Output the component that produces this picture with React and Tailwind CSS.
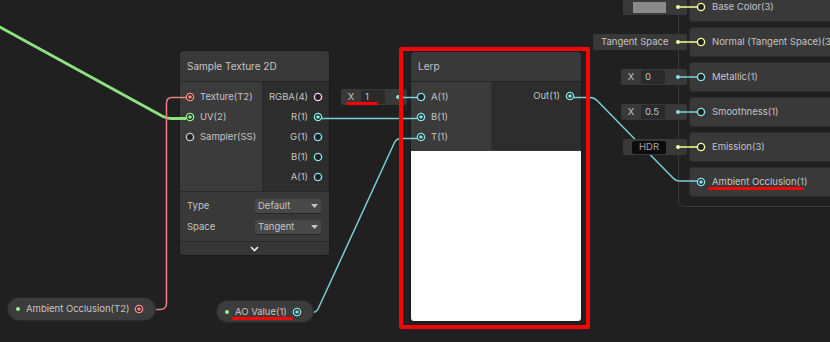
const FLOAT = '#84e4e7';
const VEC2 = '#9aef92';
const VEC3 = '#f6ff9a';
const VEC4 = '#fbcbf4';
const TEX = '#ff8b8b';
const SAMPLER = '#c8c8c8';
const WIRE_CYAN = '#78d0d4';

function Port({ color, filled }) {
  return (
    <svg width="10" height="10" viewBox="0 0 10 10" className="shrink-0">
      <circle cx="5" cy="5" r="3.6" fill="#1e1e1e" stroke={color} strokeWidth="1.4" />
      {filled && <circle cx="5" cy="5" r="1.8" fill={color} />}
    </svg>
  );
}

function Dot({ color }) {
  return <span className="w-[4px] h-[4px] rounded-full shrink-0" style={{ backgroundColor: color }} />;
}

function InRow({ label, color, filled }) {
  return (
    <div className="h-[20px] flex items-center pl-[5px] gap-[5px]">
      <Port color={color} filled={filled} />
      <span className="leading-none whitespace-nowrap">{label}</span>
    </div>
  );
}

function OutRow({ label, color, filled }) {
  return (
    <div className="h-[20px] flex items-center justify-end pr-[6px] gap-[5px]">
      <span className="leading-none whitespace-nowrap">{label}</span>
      <Port color={color} filled={filled} />
    </div>
  );
}

function Dropdown({ value }) {
  return (
    <div className="w-[66px] h-[14px] bg-[#484848] rounded-[2px] flex items-center justify-between px-[3px] shadow-[0_1px_0_#262626]">
      <span className="leading-none">{value}</span>
      <svg width="7" height="4" viewBox="0 0 7 4">
        <polygon points="0,0 7,0 3.5,4" fill="#c4c4c4" />
      </svg>
    </div>
  );
}

function SampleTexture() {
  return (
    <div className="absolute left-[180px] top-[51px] w-[149px] flex flex-col rounded-[3px] overflow-hidden text-[9.5px] text-[#c4c4c4] shadow-[0_0_0_1px_#1a1a1a]">
      <div className="h-[31px] bg-[#393939] flex items-center px-[7px] text-[10px] border-b border-[#252525]">
        Sample Texture 2D
      </div>
      <div className="flex h-[109px]">
        <div className="w-[82px] bg-[#3b3b3b] pt-[5px] flex flex-col">
          <InRow label="Texture(T2)" color={TEX} filled />
          <InRow label="UV(2)" color={VEC2} filled />
          <InRow label="Sampler(SS)" color={SAMPLER} />
        </div>
        <div className="flex-1 bg-[#2d2d2d] pt-[5px] flex flex-col">
          <OutRow label="RGBA(4)" color={VEC4} />
          <OutRow label="R(1)" color={FLOAT} filled />
          <OutRow label="G(1)" color={FLOAT} />
          <OutRow label="B(1)" color={FLOAT} />
          <OutRow label="A(1)" color={FLOAT} />
        </div>
      </div>
      <div className="h-[50px] bg-[#393939] border-t border-[#2a2a2a] pl-[7px] pr-[8px] pt-[7px] flex flex-col gap-[7px]">
        <div className="h-[14px] flex items-center justify-between">
          <span className="leading-none">Type</span>
          <Dropdown value="Default" />
        </div>
        <div className="h-[14px] flex items-center justify-between">
          <span className="leading-none">Space</span>
          <Dropdown value="Tangent" />
        </div>
      </div>
      <div className="h-[14px] bg-[#363636] border-t border-[#2a2a2a] flex items-center justify-center">
        <svg width="9" height="6" viewBox="0 0 9 6">
          <polyline points="1,1 4.5,4.5 8,1" fill="none" stroke="#e8e8e8" strokeWidth="1.6" />
        </svg>
      </div>
    </div>
  );
}

function Lerp() {
  return (
    <div className="absolute left-[411px] top-[52px] w-[170px] flex flex-col rounded-[3px] overflow-hidden text-[9.5px] text-[#c4c4c4] shadow-[0_0_0_1px_#1a1a1a]">
      <div className="h-[30px] bg-[#393939] flex items-center px-[7px] text-[10px] border-b border-[#252525]">
        Lerp
      </div>
      <div className="flex h-[68px]">
        <div className="w-[80px] bg-[#3b3b3b] pt-[5px] flex flex-col">
          <InRow label="A(1)" color={FLOAT} />
          <InRow label="B(1)" color={FLOAT} filled />
          <InRow label="T(1)" color={FLOAT} filled />
        </div>
        <div className="flex-1 bg-[#2d2d2d] pt-[4px] flex flex-col">
          <OutRow label="Out(1)" color={FLOAT} filled />
        </div>
      </div>
      <div className="h-[171px] bg-white border-t border-[#3a3a3a]" />
    </div>
  );
}

function Pill({ label, port, className }) {
  return (
    <div className={`absolute flex items-center bg-[#3c3c3c] rounded-full text-[9.5px] text-[#c4c4c4] shadow-[0_0_0_1px_#2a2a2a] ${className}`}>
      <span className="ml-[8px] flex"><Dot color={VEC2} /></span>
      <span className="ml-[6px] leading-none whitespace-nowrap">{label}</span>
      <span className="ml-auto mr-[11px] flex"><Port color={port} filled /></span>
    </div>
  );
}

function FloatField({ value, className }) {
  return (
    <div className={`absolute w-[66px] h-[16px] bg-[#393939] rounded-[2px] flex items-center text-[9.5px] text-[#c4c4c4] ${className}`}>
      <span className="w-[20px] text-center leading-none">X</span>
      <span className="w-[24px] h-[14px] bg-[#2a2a2a] rounded-[2px] pl-[4px] flex items-center leading-none">{value}</span>
      <span className="ml-auto mr-[7px] flex"><Dot color={FLOAT} /></span>
    </div>
  );
}

function MasterRow({ label, color, filled }) {
  return (
    <div className="h-[28px] bg-[#393939] rounded-[3px] flex items-center pl-[6px] gap-[6px] text-[9.5px] text-[#c4c4c4] shadow-[0_0_0_1px_#2c2c2c]">
      <Port color={color} filled={filled} />
      <span className="leading-none whitespace-nowrap">{label}</span>
    </div>
  );
}

export default function App() {
  return (
    <div className="relative w-[830px] h-[342px] bg-[#202020] overflow-hidden font-['Inter',sans-serif]">
      {/* master stack context */}
      <div className="absolute left-[678px] top-[-30px] w-[200px] border border-[#3a3a3a] rounded-[7px] pl-[11px] pt-[22px] pb-[10px] flex flex-col gap-[7px]">
        <MasterRow label="Base Color(3)" color={VEC3} />
        <MasterRow label="Normal (Tangent Space)(3)" color={VEC3} />
        <MasterRow label="Metallic(1)" color={FLOAT} />
        <MasterRow label="Smoothness(1)" color={FLOAT} />
        <MasterRow label="Emission(3)" color={VEC3} />
        <MasterRow label="Ambient Occlusion(1)" color={FLOAT} filled />
      </div>

      <SampleTexture />
      <Lerp />

      {/* edges */}
      <svg className="absolute inset-0" width="830" height="342" viewBox="0 0 830 342" fill="none">
        <path d="M -2 26 L 163 116.5 Q 167 118.5 171 118.5 L 186 118.5" stroke="#8fe083" strokeWidth="3" />
        <path d="M 186 97.5 L 172 97.5 Q 166.5 97.5 166.5 103 L 166.5 303 Q 166.5 309.5 160 309.5 L 150 309.5" stroke="#ec8080" strokeWidth="1.5" />
        <path d="M 322 118.5 L 417 118.5" stroke={WIRE_CYAN} strokeWidth="1.5" />
        <path d="M 302 312.5 L 312 312.5 Q 316.5 312.5 318.5 308 L 394.5 142.5 Q 396.5 138.5 401 138.5 L 417 138.5" stroke={WIRE_CYAN} strokeWidth="1.5" />
        <path d="M 574 97.5 L 590 97.5 Q 594 97.5 597 100.5 L 673 178 Q 676 181 680 181 L 697 181" stroke={WIRE_CYAN} strokeWidth="1.5" />
      </svg>

      <Pill label="Ambient Occlusion(T2)" port={TEX} className="left-[8px] top-[298px] w-[147px] h-[22px]" />
      <Pill label="AO Value(1)" port={FLOAT} className="left-[217px] top-[301px] w-[96px] h-[21px]" />

      {/* inline value fields */}
      <FloatField value="1" className="left-[341px] top-[89px]" />
      <div className="absolute left-[623px] top-[-1px] w-[64px] h-[16px] bg-[#393939] rounded-[2px] flex items-center">
        <span className="ml-[10px] w-[33px] h-[11px] bg-[#8a8a8a]" />
        <span className="ml-auto mr-[7px] flex"><Dot color={VEC3} /></span>
      </div>
      <div className="absolute left-[593px] top-[34px] w-[94px] h-[16px] bg-[#393939] rounded-[2px] flex items-center text-[9.5px] text-[#c4c4c4]">
        <span className="ml-[8px] leading-none whitespace-nowrap">Tangent Space</span>
        <span className="ml-auto mr-[7px] flex"><Dot color={VEC3} /></span>
      </div>
      <FloatField value="0" className="left-[621px] top-[69px]" />
      <FloatField value="0.5" className="left-[621px] top-[104px]" />
      <div className="absolute left-[623px] top-[139px] w-[64px] h-[16px] bg-[#393939] rounded-[2px] flex items-center text-[9.5px]">
        <span className="ml-[9px] w-[34px] h-[13px] bg-[#0c0c0c] rounded-[2px] flex items-center justify-center leading-none text-[#a8a8a8]">HDR</span>
        <span className="ml-auto mr-[7px] flex"><Dot color={VEC3} /></span>
      </div>

      {/* inline connectors */}
      <svg className="absolute inset-0" width="830" height="342" viewBox="0 0 830 342" fill="none">
        <path d="M 398 97.5 L 417 97.5" stroke={WIRE_CYAN} strokeWidth="1.5" />
        <path d="M 678 7 L 697 7" stroke={VEC3} strokeWidth="1.5" />
        <path d="M 678 42 L 697 42" stroke={VEC3} strokeWidth="1.5" />
        <path d="M 678 77 L 697 77" stroke={WIRE_CYAN} strokeWidth="1.5" />
        <path d="M 678 112 L 697 112" stroke={WIRE_CYAN} strokeWidth="1.5" />
        <path d="M 678 147 L 697 147" stroke={VEC3} strokeWidth="1.5" />
      </svg>

      {/* annotations */}
      <div className="absolute left-[399px] top-[47px] w-[191px] h-[282px] border-[4px] border-[#ff0000] rounded-[2px]" />
      <div className="absolute left-[346px] top-[102px] w-[32px] h-[3px] bg-[#ff0000] rounded-full" />
      <div className="absolute left-[232px] top-[317px] w-[61px] h-[3px] bg-[#ff0000] rounded-full" />
      <div className="absolute left-[708px] top-[187px] w-[96px] h-[3px] bg-[#ff0000] rounded-full" />
    </div>
  );
}
